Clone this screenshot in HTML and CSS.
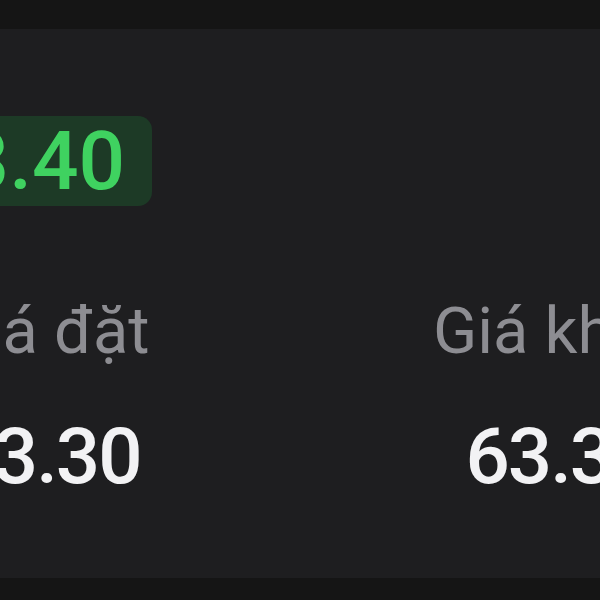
FILE: index.html
```html
<!DOCTYPE html>
<html lang="vi">
<head>
    <meta charset="UTF-8">
    <meta name="viewport" content="width=device-width, initial-scale=1.0">
    <title>Lệnh đặt</title>
    <link rel="stylesheet" href="styles.css">
</head>
<body>
    <div class="topbar"></div>

    <div class="order-card">
        <div class="card-inner">
            <div class="price-row">
                <span class="price-badge">63.40</span>
            </div>

            <div class="stats">
                <div class="stat-item">
                    <span class="stat-label">Giá đặt</span>
                    <span class="stat-value">63.30</span>
                </div>
                <div class="stat-item">
                    <span class="stat-label">Giá khớp</span>
                    <span class="stat-value">63.30</span>
                </div>
            </div>
        </div>
    </div>

    <div class="bottombar"></div>
</body>
</html>
```

FILE: styles.css
```css
* {
    margin: 0;
    padding: 0;
    box-sizing: border-box;
}

body {
    font-family: Roboto, 'Noto Sans', sans-serif;
    background: #151515;
    width: 600px;
    height: 600px;
    overflow: hidden;
}

.topbar {
    height: 29px;
    background: #151515;
}

.order-card {
    height: 549px;
    background: #1e1e20;
    overflow: hidden;
}

.card-inner {
    margin-left: -211px;
    padding-top: 87px;
}

/* Green price pill, its left part runs off screen */
.price-row {
    padding-left: 127px;
}

.price-badge {
    display: inline-block;
    height: 90px;
    line-height: 90px;
    padding: 0 27px 0 0;
    background: #1d3a26;
    border-radius: 14px;
    color: #3fd260;
    font-size: 82px;
    font-weight: 500;
}

.stats {
    display: grid;
    grid-template-columns: 514px 514px;
    margin-top: 89px;
}

.stat-item {
    display: flex;
    flex-direction: column;
    align-items: center;
}

.stat-label {
    font-size: 65px;
    line-height: 72px;
    color: #8d8d92;
}

.stat-value {
    margin-top: 45px;
    font-size: 78px;
    line-height: 90px;
    font-weight: 500;
    letter-spacing: -2px;
    color: #f2f2f4;
}

.bottombar {
    height: 22px;
    background: #151515;
}
```
